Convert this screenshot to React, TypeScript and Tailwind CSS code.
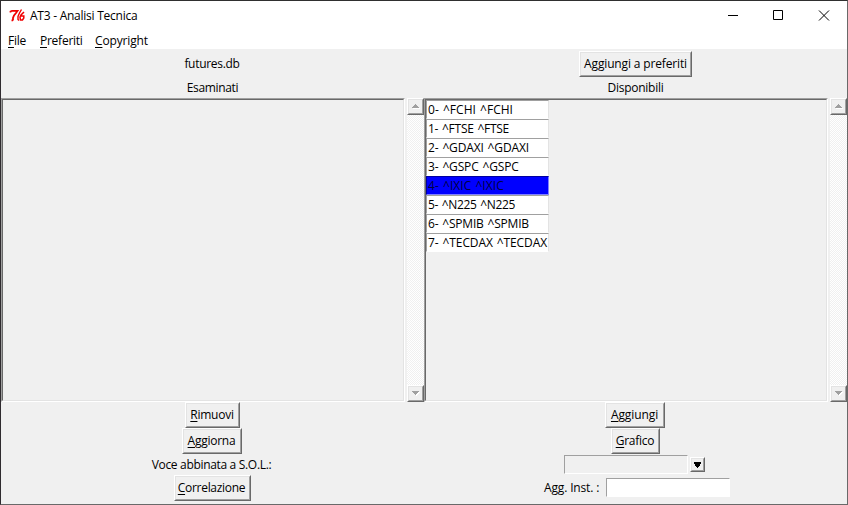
import React from "react";

const RAISED =
  "border border-t-white border-l-white border-r-[#696969] border-b-[#696969] bg-[#f0f0f0]";
const RAISED_INNER =
  "border border-t-[#e3e3e3] border-l-[#e3e3e3] border-r-[#a0a0a0] border-b-[#a0a0a0]";

function Label({ text, mnemonic, className = "" }: { text: string; mnemonic?: boolean; className?: string }) {
  return (
    <span className={`whitespace-pre ${className}`}>
      {mnemonic ? (
        <>
          <span className="underline underline-offset-2">{text[0]}</span>
          {text.slice(1)}
        </>
      ) : (
        text
      )}
    </span>
  );
}

function Button({ text, mnemonic, className }: { text: string; mnemonic?: boolean; className: string }) {
  return (
    <button className={`block h-[26px] shrink-0 ${RAISED} ${className}`}>
      <span className={`flex h-full items-center justify-center ${RAISED_INNER}`}>
        <Label text={text} mnemonic={mnemonic} className={mnemonic ? "mr-px" : ""} />
      </span>
    </button>
  );
}

function ScrollArrow({ down }: { down?: boolean }) {
  return (
    <div className={`h-[17px] w-[17px] shrink-0 ${RAISED}`}>
      <div className={`flex h-full items-center justify-center ${RAISED_INNER}`}>
        <svg width="9" height="7" viewBox="0 0 9 7" shapeRendering="crispEdges">
          {down ? (
            <>
              <path d="M2 2h7v1H8v1H7v1H6v1H5V5H4V4H3V3H2z" fill="#fff" />
              <path d="M1 1h7v1H7v1H6v1H5v1H4V4H3V3H2V2H1z" fill="#a0a0a0" />
            </>
          ) : (
            <>
              <path d="M2 5h7v1H2z" fill="#fff" />
              <path d="M4 1h1v1h1v1h1v1h1v1H1V4h1V3h1V2h1z" fill="#a0a0a0" />
            </>
          )}
        </svg>
      </div>
    </div>
  );
}

function Pane({ children }: { children?: React.ReactNode }) {
  return (
    <div className="flex h-[304px] w-[423px]">
      <div className="w-[404px] border border-t-[#a0a0a0] border-l-[#a0a0a0] border-r-white border-b-white">
        <div className="h-full border border-t-[#696969] border-l-[#696969] border-r-[#e3e3e3] border-b-[#e3e3e3]">
          {children}
        </div>
      </div>
      <div className="ml-0.5 flex w-[17px] flex-col justify-between bg-[#f8f8f8] bg-[repeating-conic-gradient(#f0f0f0_0_25%,#fff_0_50%)] bg-[length:2px_2px]">
        <ScrollArrow />
        <ScrollArrow down />
      </div>
    </div>
  );
}

const rows = [
  { symbol: "FCHI", tracking: "tracking-[0.03px]" },
  { symbol: "FTSE", tracking: "tracking-[-0.27px]" },
  { symbol: "GDAXI", tracking: "tracking-[-0.15px]" },
  { symbol: "GSPC", tracking: "tracking-[-0.15px]" },
  { symbol: "IXIC", tracking: "tracking-[0.05px]" },
  { symbol: "N225", tracking: "tracking-[-0.35px]" },
  { symbol: "SPMIB", tracking: "tracking-[-0.2px]" },
  { symbol: "TECDAX", tracking: "tracking-[-0.1px]" },
];
const selected = 4;

export default function App() {
  return (
    <div className="h-[505px] w-[848px] cursor-default overflow-hidden border border-t-[#2f2f2f] border-r-[#696969] border-b-[#696969] border-l-[#2f2b2f] bg-[#f0f0f0] font-['Open_Sans','Noto_Sans',sans-serif] text-[12px] leading-4 tracking-[-0.25px] text-black">
      <header className="flex h-[30px] items-center bg-white">
        <svg className="ml-2 shrink-0" width="16" height="16" viewBox="0 0 16 16" fill="none" stroke="#f00000">
          <path d="M1.5 4.5V3.5L3 2.8H8.5L7 5L5 7.5L4 10V12.5M2.5 12.3H4" strokeWidth="1.8" />
          <path d="M12.5 1.5L10.5 5L9 8.5V11.5L10 12.5" strokeWidth="1.4" />
          <path d="M15 4L12 7L11 9L11.5 12H13.5L14.8 10V8H12" strokeWidth="1.5" />
        </svg>
        <Label text="AT3 - Analisi Tecnica" className="ml-[5px]" />
        <svg className="ml-auto mr-[16px]" width="103" height="12" viewBox="0 0 103 12" fill="none" stroke="#000">
          <path d="M0 5.5h10M45.5 .5h9v9h-9zM91 .5l10 10M101 .5l-10 10" />
        </svg>
      </header>
      <nav className="flex h-[18px] items-center bg-white pt-0.5 pl-[7px]">
        <Label text="File" mnemonic className="w-8" />
        <Label text="Preferiti" mnemonic className="w-[55px]" />
        <Label text="Copyright" mnemonic className="tracking-[-0.15px]" />
      </nav>
      <main className="grid grid-cols-2">
        <div className="flex h-[29px] items-center justify-center">
          <Label text="futures.db" className="mr-px tracking-[-0.3px]" />
        </div>
        <div className="flex h-[29px] items-center justify-center">
          <Button text="Aggiungi a preferiti" className="w-[113px] tracking-[-0.15px]" />
        </div>
        <div className="flex h-5 items-center justify-center">
          <Label text="Esaminati" className="tracking-[-0.35px]" />
        </div>
        <div className="flex h-5 items-center justify-center">
          <Label text="Disponibili" className="tracking-[-0.25px]" />
        </div>
        <Pane />
        <Pane>
          {rows.map(({ symbol, tracking }, i) => (
            <div
              key={symbol}
              className={`flex h-[19px] w-[123px] items-center border pl-px [word-spacing:1px] ${tracking} ${
                i === selected
                  ? "border-t-[#0000a0] border-r-[#8080ff] border-b-[#8080ff] border-l-[#0000a0] bg-[#0000ff] text-[#000040]"
                  : "border-t-[#a0a0a0] border-r-[#e3e3e3] border-b-white border-l-[#a0a0a0] bg-white"
              }`}
            >
              <Label text={`${i}- ^${symbol} ^${symbol}`} />
            </div>
          ))}
        </Pane>
        <div className="flex flex-col items-center">
          <Button text="Rimuovi" mnemonic className="w-[55px]" />
          <Button text="Aggiorna" mnemonic className="mr-px w-[60px]" />
          <div className="flex h-[21px] items-center">
            <Label text="Voce abbinata a S.O.L.:" className="mr-0.5 tracking-[-0.32px]" />
          </div>
          <Button text="Correlazione" mnemonic className="mr-px w-[77px] tracking-[-0.3px]" />
        </div>
        <div className="flex flex-col items-center">
          <Button text="Aggiungi" mnemonic className="mr-px w-[60px] tracking-[-0.1px]" />
          <Button text="Grafico" mnemonic className="w-[49px]" />
          <div className="mt-px mr-0.5 flex h-5 items-center gap-0.5">
            <div className="mb-px h-[19px] w-[124px] border border-t-[#a0a0a0] border-r-white border-b-white border-l-[#a0a0a0]" />
            <div className={`mb-px h-[15px] w-[15px] ${RAISED}`}>
              <div className={`flex h-full items-center justify-center ${RAISED_INNER}`}>
                <svg width="7" height="6" viewBox="0 0 7 6" shapeRendering="crispEdges">
                  <path d="M0 0h7v2H6v2H5v1H4v1H3V5H2V4H1V2H0z" />
                </svg>
              </div>
            </div>
          </div>
          <div className="mt-[3px] ml-[3px] flex h-[19px] items-center">
            <Label text="Agg. Inst. :" className="w-[62px] tracking-[-0.15px]" />
            <div className="h-[19px] w-[124px] border border-t-[#a0a0a0] border-r-white border-b-white border-l-[#a0a0a0] bg-white" />
          </div>
        </div>
      </main>
    </div>
  );
}
